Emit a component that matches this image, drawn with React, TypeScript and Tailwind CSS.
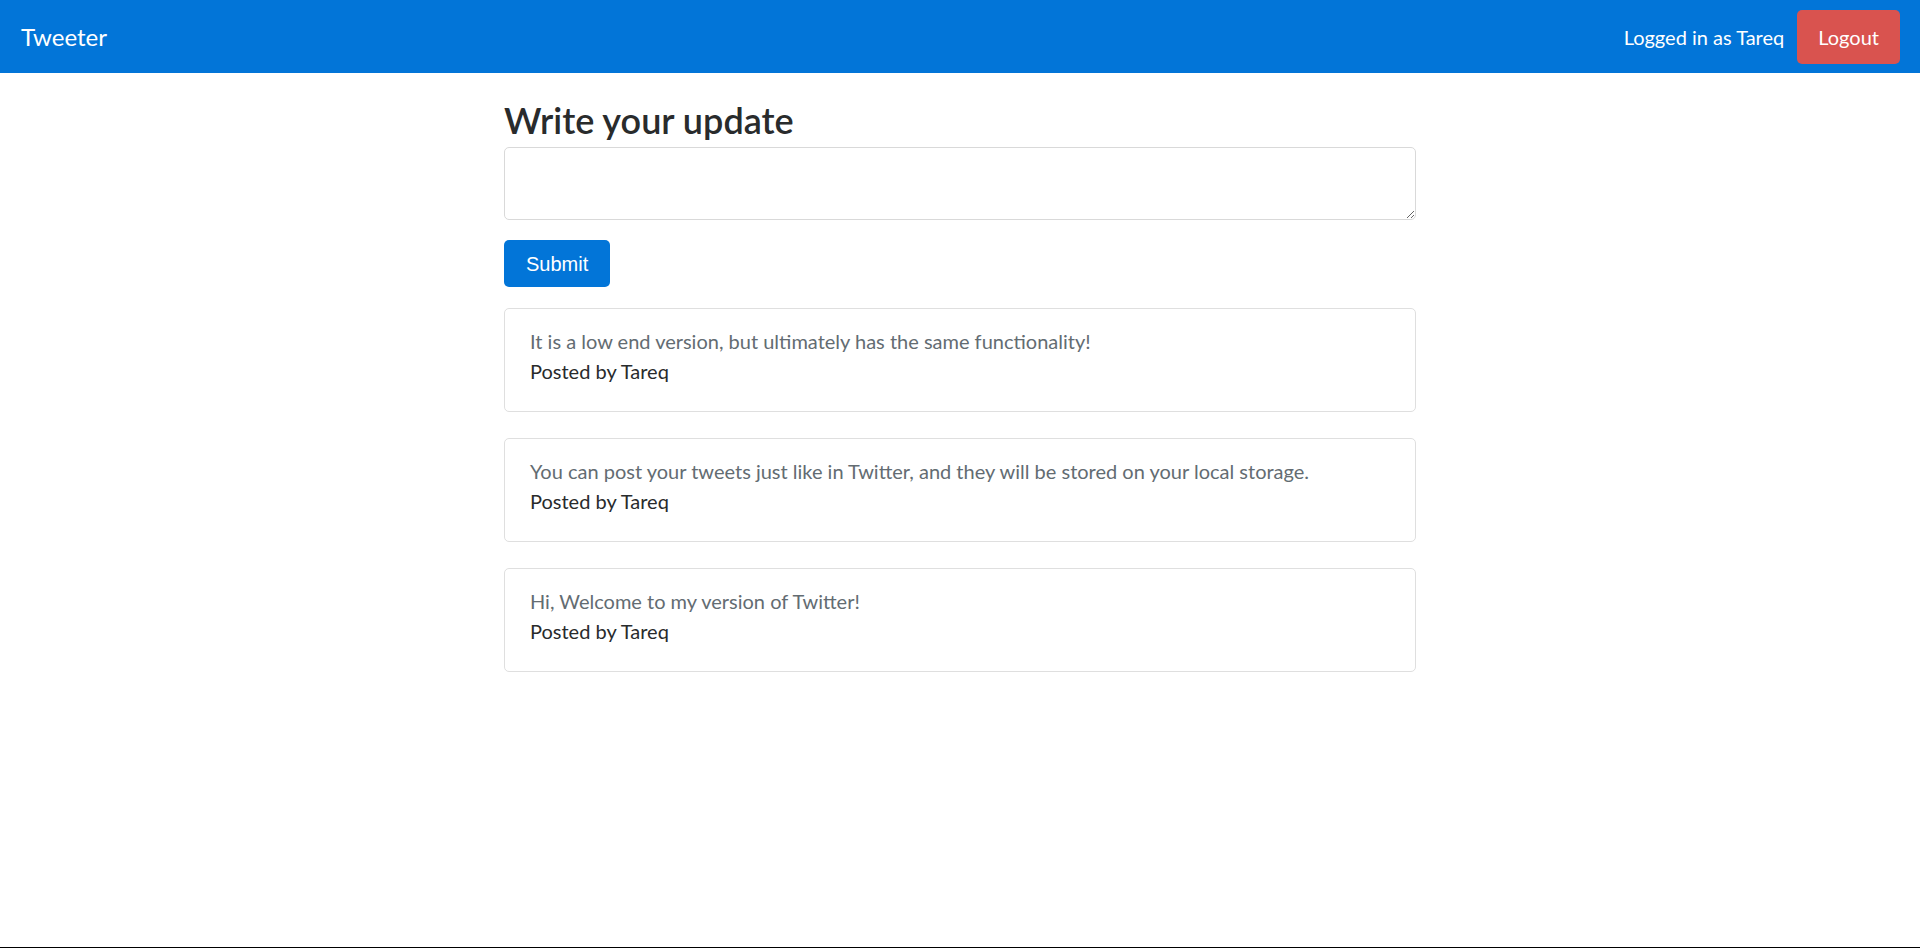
import { useState } from "react";

const font = { fontFamily: "Lato, 'Open Sans', sans-serif" };

export default function App() {
  const [text, setText] = useState("");
  const tweets = [
    "It is a low end version, but ultimately has the same functionality!",
    "You can post your tweets just like in Twitter, and they will be stored on your local storage.",
    "Hi, Welcome to my version of Twitter!",
  ];

  return (
    <div className="min-h-screen flex flex-col bg-white font-['Lato',_'Open_Sans',_sans-serif]">
      <nav className="h-[73px] bg-[#0275d8] flex items-center justify-between pl-[21px] pr-[20px]">
        <span className="text-[24px] text-white leading-none">Tweeter</span>
        <div className="flex items-center gap-[13px]">
          <span className="text-[20px] text-white">Logged in as Tareq</span>
          <button className="h-[54px] px-[21px] rounded-[5px] bg-[#d9534f] text-white text-[20px]">
            Logout
          </button>
        </div>
      </nav>

      <main className="w-[912px] mx-auto pt-[25px] flex-1">
        <h2 className="text-[36px] leading-[44px] font-semibold text-[#292b2c] mb-[5px]">
          Write your update
        </h2>
        <textarea
          value={text}
          onChange={(e) => setText(e.target.value)}
          className="block w-full h-[73px] border border-[#d9d9d9] rounded-[5px] px-[15px] py-[10px] text-[20px] outline-none"
        />
        <button className="mt-[20px] h-[47px] px-[22px] rounded-[5px] bg-[#0275d8] text-white text-[20px] font-['Liberation_Sans',_Arial,_sans-serif]">
          Submit
        </button>

        <div className="mt-[21px] flex flex-col gap-[26px]">
          {tweets.map((t, i) => (
            <div
              key={i}
              className="border border-[#dfdfdf] rounded-[5px] pl-[25px] pr-[25px] pt-[17px] pb-[25px] text-[20px] leading-[30px]"
              style={font}
            >
              <p className="text-[#636c72]">{t}</p>
              <p className="text-[#292b2c]">Posted by Tareq</p>
            </div>
          ))}
        </div>
      </main>

      <div className="h-px bg-black" />
    </div>
  );
}
